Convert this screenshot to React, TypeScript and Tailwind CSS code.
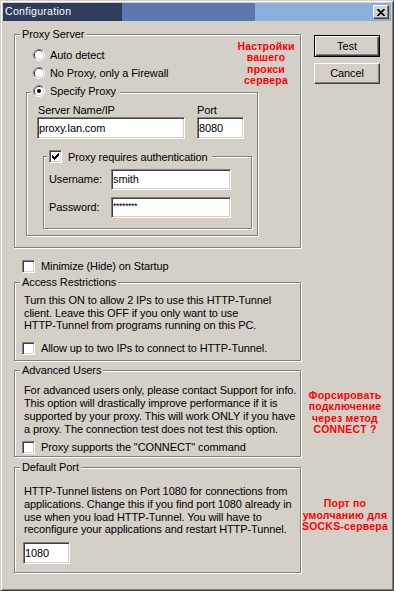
import type { ReactNode } from 'react';

const sunken =
  'bg-white border border-t-[#808080] border-l-[#808080] border-r-white border-b-white shadow-[inset_1px_1px_0_#404040,inset_-1px_-1px_0_#d4d0c8]';

function Radio({ checked }: { checked?: boolean }) {
  return (
    <svg width="12" height="12" viewBox="0 0 12 12" className="shrink-0">
      <path d="M2.11 9.89 A5.5 5.5 0 0 1 9.89 2.11" fill="none" stroke="#808080" />
      <path d="M9.89 2.11 A5.5 5.5 0 0 1 2.11 9.89" fill="none" stroke="#ffffff" />
      <path d="M2.82 9.18 A4.5 4.5 0 0 1 9.18 2.82" fill="none" stroke="#404040" />
      <path d="M9.18 2.82 A4.5 4.5 0 0 1 2.82 9.18" fill="none" stroke="#d4d0c8" />
      <circle cx="6" cy="6" r="4" fill="#ffffff" />
      {checked && <circle cx="6" cy="6" r="2" fill="#000000" />}
    </svg>
  );
}

function Check({ checked }: { checked?: boolean }) {
  return (
    <span className={`flex w-[13px] h-[13px] shrink-0 items-center justify-center ${sunken}`}>
      {checked && (
        <svg width="7" height="7" viewBox="0 0 7 7">
          {[2, 3, 4, 3, 2, 1, 0].map((y, x) => (
            <rect key={x} x={x} y={y} width="1" height="3" fill="#000" />
          ))}
        </svg>
      )}
    </span>
  );
}

function Field({ value, className }: { value: string; className: string }) {
  return (
    <div className={`${sunken} flex items-center pl-[1px] leading-none ${className}`}>{value}</div>
  );
}

function Group({
  label,
  className,
  legendClass,
  children,
}: {
  label: ReactNode;
  className: string;
  legendClass: string;
  children: ReactNode;
}) {
  return (
    <fieldset
      className={`min-w-0 shrink-0 border border-[#808080] shadow-[inset_1px_1px_0_#fff,1px_1px_0_#fff] ${className}`}>
      <legend className={`bg-[#d4d0c8] leading-[13px] ${legendClass}`}>{label}</legend>
      {children}
    </fieldset>
  );
}

function Note({ children, className }: { children: ReactNode; className: string }) {
  return (
    <div
      className={`shrink-0 whitespace-nowrap text-center font-bold text-[#ff0000] text-[10.5px] tracking-[0.2px] ${className}`}>
      {children}
    </div>
  );
}

export default function App() {
  return (
    <div className="w-[394px] h-[591px] overflow-hidden bg-[#d4d0c8] text-black text-[11px] tracking-[-0.1px] font-['Liberation_Sans',Arial,sans-serif] border border-t-[#d4d0c8] border-l-[#d4d0c8] border-r-[#404040] border-b-[#404040] shadow-[inset_1px_1px_0_#fff,inset_-1px_-1px_0_#808080] p-[2px] flex flex-col">
      <div className="h-[18px] shrink-0 flex items-center bg-[linear-gradient(to_right,#303c5e_0,#303c5e_119px,#5b78ae_119px,#5b78ae_252px,#8cafdb_252px)]">
        <span className="pl-[2px] text-white text-[10.5px] tracking-[0.3px]">Configuration</span>
        <button className="ml-auto mr-[2px] w-[16px] h-[14px] flex items-center justify-center bg-[#d4d0c8] border border-t-white border-l-white border-r-[#404040] border-b-[#404040] shadow-[inset_-1px_-1px_0_#808080]">
          <svg width="8" height="7" viewBox="0 0 8 7">
            <path d="M0.5 0 L7.5 7 M7.5 0 L0.5 7" stroke="#000" strokeWidth="1.7" />
          </svg>
        </button>
      </div>

      <div className="flex mt-[7px]">
        <Group
          label="Proxy Server"
          className="ml-[11px] w-[287px] h-[220px]"
          legendClass="ml-[5px] px-[2px]">
          <div className="flex h-[41px]">
            <div className="mt-[5px] pl-[18px]">
              <div className="h-[18px] flex items-center gap-[5px]">
                <Radio />
                <span>Auto detect</span>
              </div>
              <div className="h-[18px] flex items-center gap-[5px]">
                <Radio />
                <span>No Proxy, only a Firewall</span>
              </div>
            </div>
            <Note className="ml-auto w-[68px] leading-[11.3px]">
              Настройки
              <br />
              вашего
              <br />
              прокси
              <br />
              сервера
            </Note>
          </div>

          <Group
            label={
              <span className="h-[18px] inline-flex items-center gap-[5px]">
                <Radio checked />
                Specify Proxy
              </span>
            }
            className="ml-[11px] w-[232px] h-[154px]"
            legendClass="ml-[4px] pl-[2px] pr-[4px] leading-[18px]">
            <div className="flex ml-[10px] mt-[2px]">
              <div>
                <div className="h-[13px] leading-[13px] pl-[1px]">Server Name/IP</div>
                <Field value="proxy.lan.com" className="w-[148px] h-[22px]" />
              </div>
              <div className="ml-[12px]">
                <div className="h-[13px] leading-[13px]">Port</div>
                <Field value="8080" className="w-[47px] h-[22px]" />
              </div>
            </div>

            <Group
              label={
                <span className="h-[14px] inline-flex items-center gap-[6px]">
                  <Check checked />
                  Proxy requires authentication
                </span>
              }
              className="ml-[16px] mt-[10px] w-[209px] h-[80px]"
              legendClass="ml-[3px] pl-[2px] pr-[4px] leading-[14px]">
              <div className="pl-[5px] mt-[5px] flex flex-col gap-[7px]">
                <div className="flex items-center h-[21px]">
                  <span className="w-[62px]">Username:</span>
                  <Field value="smith" className="w-[120px] h-[21px]" />
                </div>
                <div className="flex items-center h-[21px]">
                  <span className="w-[62px]">Password:</span>
                  <Field
                    value="********"
                    className="w-[120px] h-[21px] !items-start pt-[4px] text-[9px] tracking-[-0.5px]"
                  />
                </div>
              </div>
            </Group>
          </Group>
        </Group>

        <div className="ml-[13px] mt-[7px] flex flex-col gap-[6px]">
          <button className="w-[66px] h-[22px] bg-[#d4d0c8] border border-black shadow-[inset_1px_1px_0_#fff,inset_-1px_-1px_0_#404040,inset_-2px_-2px_0_#808080]">
            Test
          </button>
          <button className="w-[66px] h-[21px] bg-[#d4d0c8] border border-t-white border-l-white border-r-[#404040] border-b-[#404040] shadow-[inset_-1px_-1px_0_#808080]">
            Cancel
          </button>
        </div>
      </div>

      <div className="ml-[19px] mt-[12px] h-[13px] shrink-0 flex items-center gap-[6px]">
        <Check />
        <span>Minimize (Hide) on Startup</span>
      </div>

      <Group
        label="Access Restrictions"
        className="ml-[11px] mt-[3px] w-[287px] h-[85px]"
        legendClass="ml-[5px] px-[2px]">
        <p className="pl-[9px] mt-[5px] leading-[12.5px] whitespace-nowrap">
          Turn this ON to allow 2 IPs to use this HTTP-Tunnel
          <br />
          client. Leave this OFF if you only want to use
          <br />
          HTTP-Tunnel from programs running on this PC.
        </p>
        <div className="pl-[7px] mt-[10px] h-[13px] flex items-center gap-[6px]">
          <Check />
          <span>Allow up to two IPs to connect to HTTP-Tunnel.</span>
        </div>
      </Group>

      <div className="flex mt-[3px]">
        <Group
          label="Advanced Users"
          className="ml-[11px] w-[287px] h-[93px]"
          legendClass="ml-[5px] px-[2px]">
          <p className="pl-[9px] mt-[7px] leading-[13px] whitespace-nowrap">
            For advanced users only, please contact Support for info.
            <br />
            This option will drastically improve performance if it is
            <br />
            supported by your proxy. This will work ONLY if you have
            <br />a proxy. The connection test does not test this option.
          </p>
          <div className="pl-[7px] mt-[5px] h-[13px] flex items-center gap-[6px]">
            <Check />
            <span>Proxy supports the "CONNECT" command</span>
          </div>
        </Group>
        <Note className="ml-[1px] w-[86px] mt-[26px] leading-[11.3px]">
          Форсировать
          <br />
          подключение
          <br />
          через метод
          <br />
          CONNECT ?
        </Note>
      </div>

      <div className="flex mt-[4px]">
        <Group
          label="Default Port"
          className="ml-[11px] w-[287px] h-[112px]"
          legendClass="ml-[5px] px-[2px]">
          <p className="pl-[9px] mt-[11px] leading-[12.8px] whitespace-nowrap">
            HTTP-Tunnel listens on Port 1080 for connections from
            <br />
            applications. Change this if you find port 1080 already in
            <br />
            use when you load HTTP-Tunnel. You will have to
            <br />
            reconfigure your applications and restart HTTP-Tunnel.
          </p>
          <div className="pl-[8px] mt-[6px]">
            <Field value="1080" className="w-[47px] h-[22px]" />
          </div>
        </Group>
        <Note className="ml-[1px] w-[86px] mt-[37px] leading-[11.7px]">
          Порт по
          <br />
          умолчанию для
          <br />
          SOCKS-сервера
        </Note>
      </div>
    </div>
  );
}
